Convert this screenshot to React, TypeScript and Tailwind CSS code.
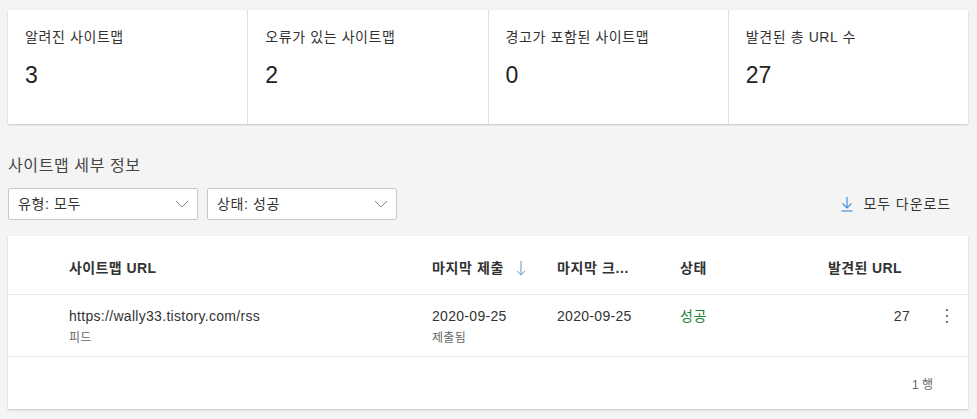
import React from "react";

const font = { fontFamily: '"Liberation Sans", "Noto Sans CJK KR", sans-serif' };

function Stat({ label, value, last }: { label: string; value: string; last?: boolean }) {
  return (
    <div className={`flex-1 pl-[17px] pt-[17px] ${last ? "" : "border-r border-[#e0e0e0]"}`}>
      <div className="text-[14px] leading-[20px] tracking-[0.6px] text-[#333]">{label}</div>
      <div className="mt-[14px] text-[23px] leading-[28px] text-[#222]">{value}</div>
    </div>
  );
}

function Select({ label }: { label: string }) {
  return (
    <div className="flex h-[32px] w-[190px] items-center justify-between rounded-[2px] border border-[#c8c8c8] bg-white pl-[9px] pr-[8px]">
      <span className="text-[14px] tracking-[0.6px] text-[#333]">{label}</span>
      <svg width="14" height="8" viewBox="0 0 14 8" fill="none">
        <path d="M1 1l6 6 6-6" stroke="#888" strokeWidth="1" />
      </svg>
    </div>
  );
}

export default function App() {
  return (
    <div className="h-[419px] w-[977px] bg-[#f4f4f4] pt-[10px]" style={font}>
      <div className="mx-[8px] flex h-[114px] w-[960px] bg-white shadow-[0_1px_2px_rgba(0,0,0,0.2)]">
        <Stat label="알려진 사이트맵" value="3" />
        <Stat label="오류가 있는 사이트맵" value="2" />
        <Stat label="경고가 포함된 사이트맵" value="0" />
        <Stat label="발견된 총 URL 수" value="27" last />
      </div>

      <div className="mt-[30px] px-[8px] text-[16px] leading-[24px] tracking-[0.6px] text-[#444]">사이트맵 세부 정보</div>

      <div className="mt-[10px] flex items-center gap-[9px] px-[8px]">
        <Select label="유형: 모두" />
        <Select label="상태: 성공" />
        <div className="ml-auto mr-[18px] flex items-center gap-[10px]">
          <svg width="14" height="16" viewBox="0 0 14 16" fill="none">
            <path d="M7 1v11M2.5 7.5L7 12l4.5-4.5" stroke="#4a90d9" strokeWidth="1.2" />
            <path d="M1.5 15h11" stroke="#4a90d9" strokeWidth="1.2" />
          </svg>
          <span className="text-[14px] tracking-[0.9px] text-[#333]">모두 다운로드</span>
        </div>
      </div>

      <div className="mx-[8px] mt-[16px] w-[960px] bg-white shadow-[0_1px_2px_rgba(0,0,0,0.2)]">
        <div className="flex h-[59px] items-start border-b border-[#e6e6e6] pt-[22px] text-[14px] font-bold leading-[20px] text-[#333]">
          <div className="w-[424px] pl-[61px] tracking-[0.4px]">사이트맵 URL</div>
          <div className="flex w-[125px] items-center gap-[12px] tracking-[0.6px]">
            <span>마지막 제출</span>
            <svg width="10" height="17" viewBox="0 0 10 17" fill="none">
              <path d="M5 1v14M1 11l4 4 4-4" stroke="#6a8fb8" strokeWidth="1" />
            </svg>
          </div>
          <div className="w-[123px] tracking-[0.6px]">마지막 크...</div>
          <div className="w-[100px] tracking-[0.6px]">상태</div>
          <div className="w-[122px] text-right tracking-[0.4px]">발견된 URL</div>
        </div>
        <div className="flex h-[62px] items-start border-b border-[#ececec] pt-[11px] text-[14px] tracking-[0.3px] text-[#333]">
          <div className="w-[424px] pl-[61px]">
            <div className="leading-[20px]">https://wally33.tistory.com/rss</div>
            <div className="mt-[4px] text-[12px] leading-[16px] text-[#666]">피드</div>
          </div>
          <div className="w-[125px]">
            <div className="leading-[20px]">2020-09-25</div>
            <div className="mt-[4px] text-[12px] leading-[16px] text-[#666]">제출됨</div>
          </div>
          <div className="w-[123px] leading-[20px]">2020-09-25</div>
          <div className="w-[100px] leading-[20px] tracking-[0.6px] text-[#188038]">성공</div>
          <div className="w-[130px] text-right leading-[20px]">27</div>
          <div className="ml-[36px] flex h-[20px] flex-col items-center justify-center gap-[4px]">
            <span className="h-[2px] w-[2px] bg-[#777]" />
            <span className="h-[2px] w-[2px] bg-[#777]" />
            <span className="h-[2px] w-[2px] bg-[#777]" />
          </div>
        </div>
        <div className="flex h-[52px] items-center justify-end pr-[35px] pt-[4px] text-[12px] text-[#666]">1 행</div>
      </div>
    </div>
  );
}
